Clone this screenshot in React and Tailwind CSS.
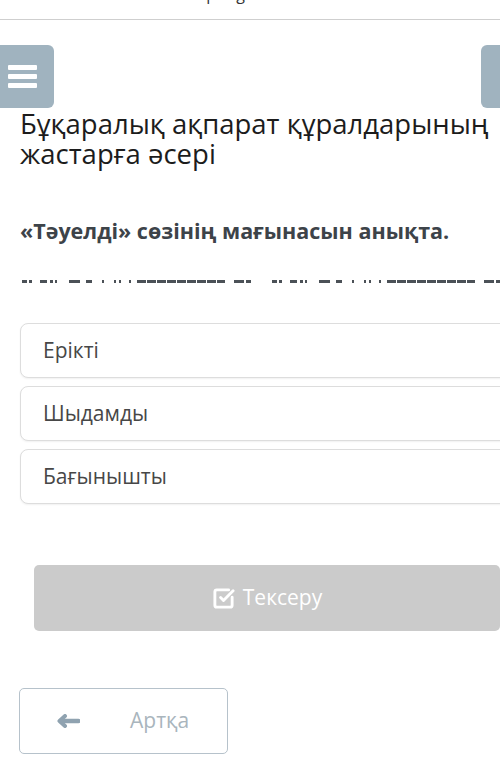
import { SquareCheckBig } from 'lucide-react';

const dashes = [
  [0, 5], [7, 10], [18, 25], [28, 31], [33, 35], [47, 58], [64, 70], [80, 82], [92, 94], [97, 99], [107, 109],
  [115, 124], [125, 134], [135, 144], [145, 154], [155, 164], [165, 174], [175, 184], [185, 194], [195, 203],
  [212, 222], [224, 229],
];

function HiddenLine() {
  return (
    <svg width="480" height="3" className="block">
      {[0, 250].map(off =>
        dashes.map(([a, b], i) => (
          <rect key={`${off}-${i}`} x={off + a} y="0" width={b - a} height="3" fill="#4b5157" />
        ))
      )}
    </svg>
  );
}

function BarsIcon() {
  return (
    <svg width="29" height="23" viewBox="0 0 29 23" className="block">
      <rect x="0" y="0" width="29" height="5" rx="1" fill="#fff" />
      <rect x="0" y="9" width="29" height="5" rx="1" fill="#fff" />
      <rect x="0" y="18" width="29" height="5" rx="1" fill="#fff" />
    </svg>
  );
}

function ArrowLeftIcon() {
  return (
    <svg width="23" height="14" viewBox="0 0 23 14" className="block">
      <polyline points="8,2 2.5,7 8,12" fill="none" stroke="#8fa2b0" strokeWidth="4" strokeLinecap="round" strokeLinejoin="round" />
      <line x1="4" y1="7" x2="21.5" y2="7" stroke="#8fa2b0" strokeWidth="4.5" strokeLinecap="round" />
    </svg>
  );
}

const options = ['Ерікті', 'Шыдамды', 'Бағынышты'];

export default function App() {
  return (
    <div className="w-[500px] h-[783px] overflow-hidden bg-white" style={{ fontFamily: '"Open Sans", "Noto Sans", sans-serif' }}>
      <div className="h-[20px] overflow-hidden border-b border-[#cfcfcf]">
        <div className="pl-[113px] text-[16px] leading-[16px] text-[#333] -mt-[14px] whitespace-nowrap">onlinemektep.org</div>
      </div>

      <div className="mt-[25px] flex justify-between">
        <div className="-ml-[6px] w-[60px] h-[63px] rounded-md bg-[#a0b3bf] flex items-center pl-[14px]">
          <BarsIcon />
        </div>
        <div className="-mr-[41px] w-[60px] h-[63px] rounded-md bg-[#a0b3bf]" />
      </div>

      <h1 className="ml-[20px] mt-[1px] text-[27.5px] leading-[30px] font-normal text-[#1c1c1c] whitespace-nowrap">
        Бұқаралық ақпарат құралдарының
        <br />
        жастарға әсері
      </h1>

      <p className="ml-[20px] mt-[49px] text-[21.5px] leading-[26px] font-bold text-[#3d4349] whitespace-nowrap">
        «Тәуелді» сөзінің мағынасын анықта.
      </p>

      <div className="ml-[22px] mt-[36px]">
        <HiddenLine />
      </div>

      <div className="ml-[20px] mt-[40px] w-[500px] flex flex-col gap-[8px]">
        {options.map(o => (
          <div key={o} className="h-[55px] rounded-lg border border-[#dddddd] shadow-[0_1px_2px_rgba(0,0,0,0.06)] bg-white flex items-center pl-[22px] text-[21px] text-[#474747]">
            {o}
          </div>
        ))}
      </div>

      <div className="ml-[34px] mt-[61px] w-[466px] h-[66px] rounded-[5px] bg-[#cbcbcb] flex items-center justify-center gap-[8px] text-white text-[21px]">
        <SquareCheckBig size={23} strokeWidth={3} color="#ffffff" />
        <span>Тексеру</span>
      </div>

      <div className="ml-[19px] mt-[57px] w-[209px] h-[66px] rounded-[5px] border border-[#b6c2cb] bg-white flex items-center pl-[37px]">
        <ArrowLeftIcon />
        <span className="ml-[50px] text-[21px] text-[#a9b5bd]">Артқа</span>
      </div>
    </div>
  );
}
